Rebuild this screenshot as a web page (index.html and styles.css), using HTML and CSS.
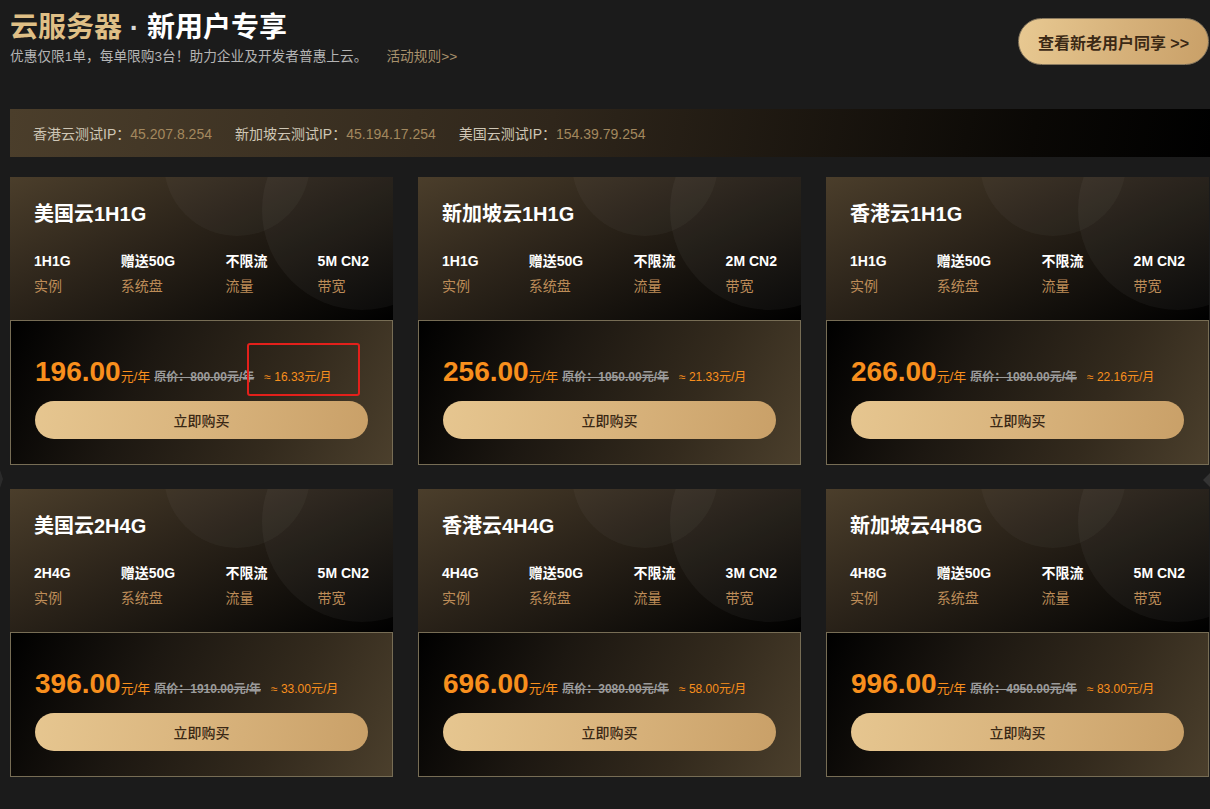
FILE: index.html
```html
<!DOCTYPE html>
<html lang="zh-CN">
<head>
<meta charset="utf-8">
<title>云服务器 · 新用户专享</title>
<link rel="stylesheet" href="styles.css">
</head>
<body>
<div class="page">
  <header class="top">
    <div class="intro">
      <h1 class="headline"><span class="gold">云服务器</span><span class="dot"> · </span><span class="white">新用户专享</span></h1>
      <p class="sub">优惠仅限1单，每单限购3台！助力企业及开发者普惠上云。<a class="rules">活动规则&gt;&gt;</a></p>
    </div>
    <a class="cta">查看新老用户同享 &gt;&gt;</a>
  </header>

  <div class="ipbar">
    <span class="ip"><span class="ip-label">香港云测试IP：</span><span class="ip-val">45.207.8.254</span></span>
    <span class="ip"><span class="ip-label">新加坡云测试IP：</span><span class="ip-val">45.194.17.254</span></span>
    <span class="ip"><span class="ip-label">美国云测试IP：</span><span class="ip-val">154.39.79.254</span></span>
  </div>

  <div class="grid">
    <div class="card">
      <div class="card-top">
        <span class="circle c1"></span><span class="circle c2"></span>
        <h2 class="card-title">美国云1H1G</h2>
        <div class="specs">
          <div class="spec"><b>1H1G</b><span>实例</span></div>
          <div class="spec"><b>赠送50G</b><span>系统盘</span></div>
          <div class="spec"><b>不限流</b><span>流量</span></div>
          <div class="spec"><b>5M CN2</b><span>带宽</span></div>
        </div>
      </div>
      <div class="card-bottom">
        <div class="price"><span class="num">196.00</span><span class="unit">元/年</span><span class="orig">原价：800.00元/年</span><span class="month">≈ 16.33元/月</span></div>
        <a class="buy">立即购买</a>
        <span class="mark"></span>
      </div>
    </div>

    <div class="card">
      <div class="card-top">
        <span class="circle c1"></span><span class="circle c2"></span>
        <h2 class="card-title">新加坡云1H1G</h2>
        <div class="specs">
          <div class="spec"><b>1H1G</b><span>实例</span></div>
          <div class="spec"><b>赠送50G</b><span>系统盘</span></div>
          <div class="spec"><b>不限流</b><span>流量</span></div>
          <div class="spec"><b>2M CN2</b><span>带宽</span></div>
        </div>
      </div>
      <div class="card-bottom">
        <div class="price"><span class="num">256.00</span><span class="unit">元/年</span><span class="orig">原价：1050.00元/年</span><span class="month">≈ 21.33元/月</span></div>
        <a class="buy">立即购买</a>
      </div>
    </div>

    <div class="card">
      <div class="card-top">
        <span class="circle c1"></span><span class="circle c2"></span>
        <h2 class="card-title">香港云1H1G</h2>
        <div class="specs">
          <div class="spec"><b>1H1G</b><span>实例</span></div>
          <div class="spec"><b>赠送50G</b><span>系统盘</span></div>
          <div class="spec"><b>不限流</b><span>流量</span></div>
          <div class="spec"><b>2M CN2</b><span>带宽</span></div>
        </div>
      </div>
      <div class="card-bottom">
        <div class="price"><span class="num">266.00</span><span class="unit">元/年</span><span class="orig">原价：1080.00元/年</span><span class="month">≈ 22.16元/月</span></div>
        <a class="buy">立即购买</a>
      </div>
    </div>

    <div class="card">
      <div class="card-top">
        <span class="circle c1"></span><span class="circle c2"></span>
        <h2 class="card-title">美国云2H4G</h2>
        <div class="specs">
          <div class="spec"><b>2H4G</b><span>实例</span></div>
          <div class="spec"><b>赠送50G</b><span>系统盘</span></div>
          <div class="spec"><b>不限流</b><span>流量</span></div>
          <div class="spec"><b>5M CN2</b><span>带宽</span></div>
        </div>
      </div>
      <div class="card-bottom">
        <div class="price"><span class="num">396.00</span><span class="unit">元/年</span><span class="orig">原价：1910.00元/年</span><span class="month">≈ 33.00元/月</span></div>
        <a class="buy">立即购买</a>
      </div>
    </div>

    <div class="card">
      <div class="card-top">
        <span class="circle c1"></span><span class="circle c2"></span>
        <h2 class="card-title">香港云4H4G</h2>
        <div class="specs">
          <div class="spec"><b>4H4G</b><span>实例</span></div>
          <div class="spec"><b>赠送50G</b><span>系统盘</span></div>
          <div class="spec"><b>不限流</b><span>流量</span></div>
          <div class="spec"><b>3M CN2</b><span>带宽</span></div>
        </div>
      </div>
      <div class="card-bottom">
        <div class="price"><span class="num">696.00</span><span class="unit">元/年</span><span class="orig">原价：3080.00元/年</span><span class="month">≈ 58.00元/月</span></div>
        <a class="buy">立即购买</a>
      </div>
    </div>

    <div class="card">
      <div class="card-top">
        <span class="circle c1"></span><span class="circle c2"></span>
        <h2 class="card-title">新加坡云4H8G</h2>
        <div class="specs">
          <div class="spec"><b>4H8G</b><span>实例</span></div>
          <div class="spec"><b>赠送50G</b><span>系统盘</span></div>
          <div class="spec"><b>不限流</b><span>流量</span></div>
          <div class="spec"><b>5M CN2</b><span>带宽</span></div>
        </div>
      </div>
      <div class="card-bottom">
        <div class="price"><span class="num">996.00</span><span class="unit">元/年</span><span class="orig">原价：4950.00元/年</span><span class="month">≈ 83.00元/月</span></div>
        <a class="buy">立即购买</a>
      </div>
    </div>
  </div>

  <span class="arrow arrow-left"></span>
  <span class="arrow arrow-right"></span>
</div>
</body>
</html>
```

FILE: styles.css
```css
* { box-sizing: border-box; }
html, body { margin: 0; padding: 0; }
body {
  background: #1b1b1b;
  font-family: "Liberation Sans", "Noto Sans CJK SC", sans-serif;
  color: #fff;
  width: 1210px;
  height: 809px;
  overflow: hidden;
}
.page {
  position: relative;
  padding: 10px 0 0 10px;
  height: 809px;
}
.top {
  display: flex;
  justify-content: space-between;
  align-items: flex-start;
}
.headline {
  margin: 0;
  font-size: 28px;
  line-height: 36px;
  font-weight: 700;
}
.gold { color: #dfbf86; }
.dot { color: #d8d8d8; }
.white { color: #fff; }
.sub {
  margin: 2px 0 0;
  font-size: 13.7px;
  line-height: 18px;
  color: #b4b4b4;
}
.rules {
  color: #a8916c;
  margin-left: 19px;
}
.cta {
  margin-top: 8px;
  width: 191px;
  height: 47px;
  border-radius: 24px;
  border: 1px solid #8a7a60;
  background: linear-gradient(100deg, #e8c992 0%, #d6b17a 55%, #c9a068 100%);
  color: #3b2915;
  font-size: 16px;
  font-weight: 700;
  display: flex;
  align-items: center;
  justify-content: center;
  margin-right: 1px;
}
.ipbar {
  margin-top: 43px;
  height: 48px;
  display: flex;
  align-items: center;
  gap: 23px;
  padding-left: 23px;
  background: linear-gradient(100deg, #4b3e2b 0%, #2f261b 45%, #0a0805 85%, #000 100%);
  font-size: 14px;
}
.ip-label { color: #cfc7b6; }
.ip-val { color: #a3885e; }
.grid {
  margin-top: 20px;
  display: grid;
  grid-template-columns: repeat(3, 383px);
  column-gap: 25px;
  row-gap: 24px;
}
.card {
  position: relative;
  height: 288px;
  display: flex;
  flex-direction: column;
}
.card-top {
  position: relative;
  overflow: hidden;
  height: 143px;
  padding: 25px 24px 0;
  background: linear-gradient(155deg, #4b3e2b 0%, #2c241a 40%, #120f0b 75%, #000 100%);
}
.circle {
  position: absolute;
  border-radius: 50%;
  background: rgba(255, 255, 255, 0.03);
}
.c1 { width: 146px; height: 146px; left: 154px; top: -87px; }
.c2 { width: 200px; height: 200px; left: 252px; top: -67px; background: rgba(255,255,255,0.04); }
.card-title {
  position: relative;
  margin: 0;
  font-size: 20px;
  line-height: 24px;
  font-weight: 700;
  color: #fff;
}
.specs {
  position: relative;
  margin-top: 26px;
  display: flex;
  justify-content: space-between;
}
.spec {
  display: flex;
  flex-direction: column;
  gap: 7px;
  font-size: 14px;
  line-height: 18px;
}
.spec b { color: #fff; font-weight: 700; }
.spec span { color: #bd8c58; }
.card-bottom {
  position: relative;
  height: 145px;
  border: 1px solid #776d55;
  padding: 35px 24px 0;
  background: linear-gradient(115deg, #000 0%, #1c1711 35%, #332a1d 70%, #4b3f2c 100%);
}
.price {
  display: flex;
  align-items: baseline;
  height: 32px;
  line-height: 32px;
  white-space: nowrap;
}
.num {
  font-size: 28px;
  font-weight: 700;
  color: #f88f1d;
}
.unit {
  font-size: 13px;
  color: #f88f1d;
}
.orig {
  margin-left: 4px;
  font-size: 12px;
  font-weight: 700;
  color: #9b9b9b;
  text-decoration: line-through;
}
.month {
  margin-left: 10px;
  font-size: 12px;
  color: #f88f1d;
}
.buy {
  margin-top: 13px;
  height: 38px;
  border-radius: 19px;
  background: linear-gradient(100deg, #e6c690 0%, #d9b47d 50%, #c9a068 100%);
  color: #3a2815;
  font-size: 14px;
  font-weight: 500;
  display: flex;
  align-items: center;
  justify-content: center;
}
.mark {
  position: absolute;
  left: 236px;
  top: 22px;
  width: 113px;
  height: 53px;
  border: 2px solid #e3201b;
  border-radius: 3px;
}
.arrow {
  position: absolute;
  top: 470px;
  width: 0;
  height: 0;
  border-top: 9px solid transparent;
  border-bottom: 9px solid transparent;
}
.arrow-left {
  left: 0;
  border-left: 3px solid #2b2b2b;
}
.arrow-right {
  right: 0;
  top: 473px;
  border-top-width: 7px;
  border-bottom-width: 7px;
  border-right: 7px solid #343434;
}
```
